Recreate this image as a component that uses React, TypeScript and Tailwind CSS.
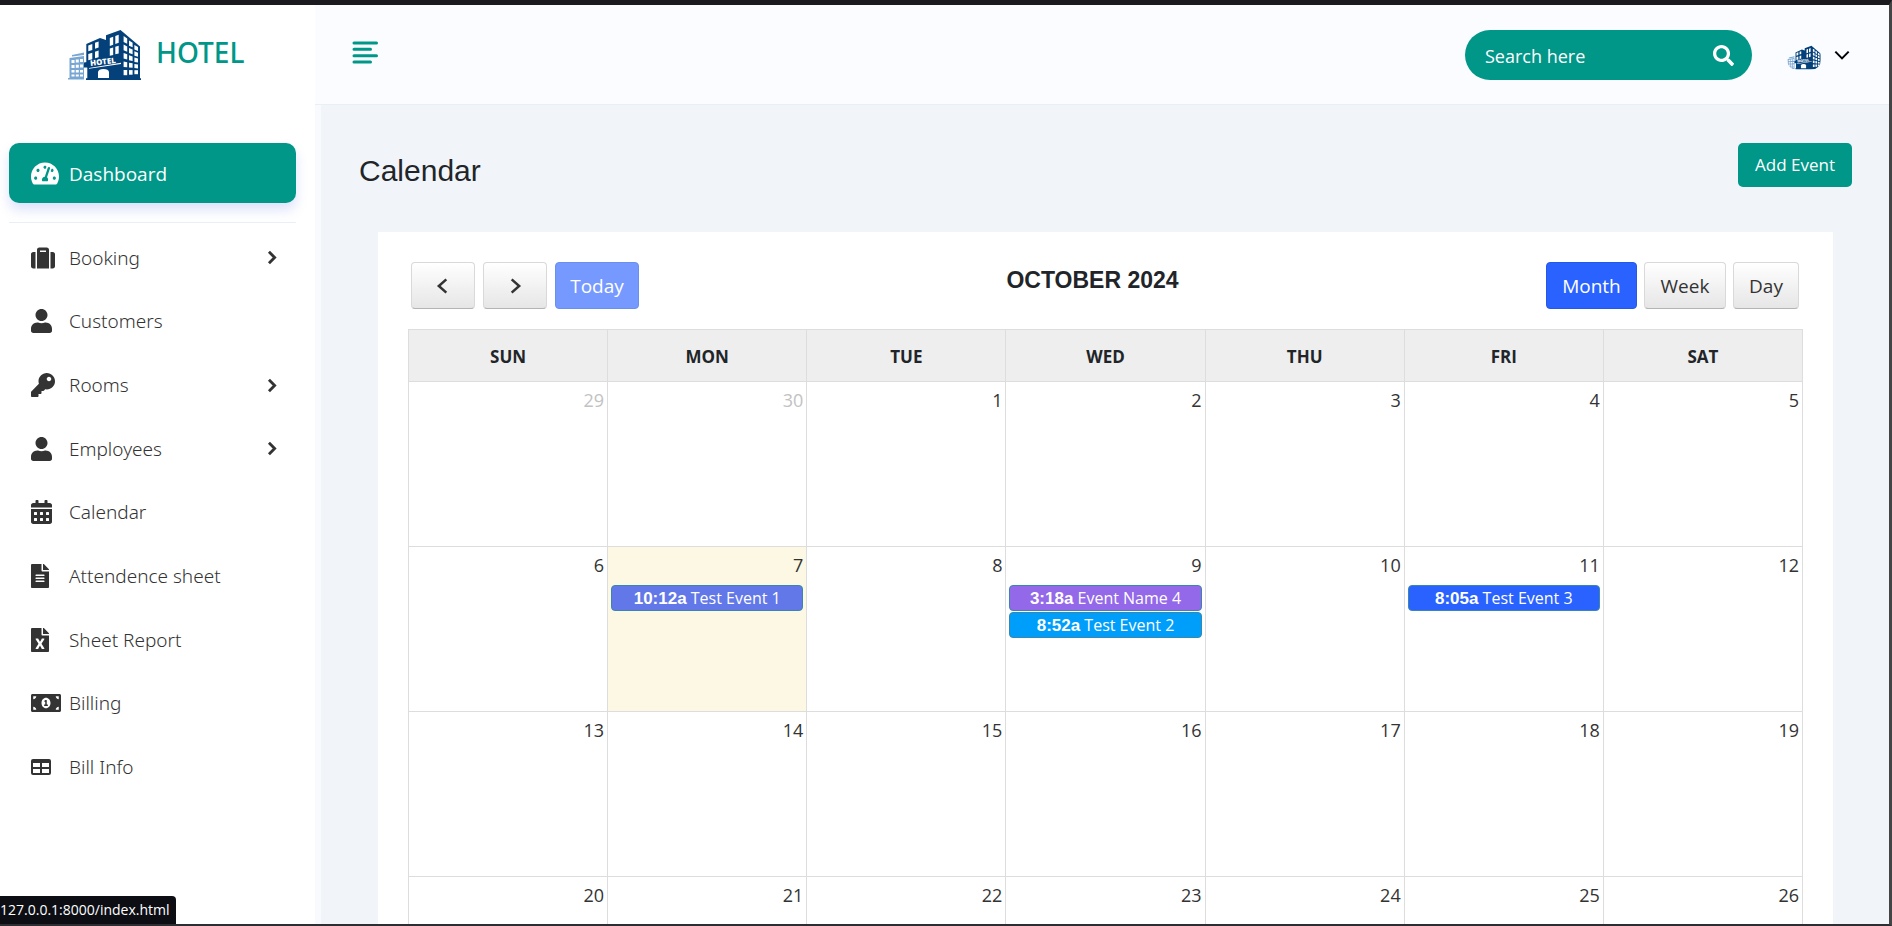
import { FaTachometerAlt, FaSuitcase, FaUser, FaKey, FaCalendarAlt, FaFileAlt, FaFileExcel, FaMoneyBillAlt, FaSearch } from "react-icons/fa";

const faceColumns = [
  { x: 55.6, top: 6, step: 8.5, height: 5.6, slope: 2.6 },
  { x: 61, top: 10.5, step: 7.4, height: 5, slope: 2.2 },
  { x: 66.4, top: 15, step: 6.3, height: 4.4, slope: 2 },
];

function HotelLogo({ className }: { className: string }) {
  return (
    <svg viewBox="0 0 73 50" className={className} aria-hidden="true">
      <path d="M4 25L16 22.500V25L4 26.500zM1.500 28L16 26V48.500H1.500z" fill="#78a6d3" />
      <path d="M0 48h16v1.500H0z" fill="#78a6d3" />
      <path
        d="M3.500 30h3v3h-3zM7.800 29.500h3v3h-3zM12 29h3v3h-3zM3.500 35h3v3h-3zM7.800 34.700h3v3h-3zM12 34.500h3v3h-3zM3.500 40h3v2.500h-3zM7.800 40h3v2.500h-3zM12 40h3v2.500h-3zM3.500 44.500h3v2h-3zM7.800 44.500h3v2h-3zM12 44.500h3v2h-3z"
        fill="#fff"
      />
      <path d="M18.300 14L32 8l6 2V5.300L52.500 0L72 16.500V48.300h1V50H18v-1.700h1.300V38L18.300 32z" fill="#04407a" />
      <path
        d="M20.300 15.500l4-1.600v6l-4 1.400zM27 12.800l3.600-1.400v6l-3.600 1.400zM20.300 24l4-1.300v6.500l-4 1zM27 21.800l3.600-1.200v6.600l-3.600 1zM41.800 8l3.400-1.300v8L41.800 16zM47.300 6l3.400-1.300v8L47.300 14zM41.800 18.500l3.400-1v7.500l-3.400 .8zM47.300 16.800l3.400-1v7.700l-3.400 .8z"
        fill="#fff"
      />
      {faceColumns.map((col) =>
        [0, 1, 2, 3, 4].map((r) => {
          const slope = col.slope * (1 - r / 4);
          return (
            <path
              key={`${col.x}-${r}`}
              d={`M${col.x} ${col.top + r * col.step}l3.600 ${slope}v${col.height - 0.4}l-3.600 ${-slope * 0.7}z`}
              fill="#fff"
            />
          );
        }),
      )}
      <path d="M16 32.500L53.500 26.500V33.500L19 37.500H16z" fill="#04407a" />
      <path d="M21 38L53 32.800V34L21 38.700z" fill="#fff" />
      <text x="22.500" y="36" fontSize="7.800" fontWeight="800" fontFamily="Open Sans, sans-serif" fill="#fff" transform="rotate(-7 22.500 36)">
        HOTEL
      </text>
      <path d="M30 48v-6q.5-3 5.500-3q5 0 5.500 3v6z" fill="#fff" />
    </svg>
  );
}

function TableIcon({ className }: { className: string }) {
  return (
    <svg viewBox="0 0 20 24" className={className} fill="currentColor" aria-hidden="true">
      <path
        fillRule="evenodd"
        d="M2 4h16a2 2 0 0 1 2 2v12a2 2 0 0 1-2 2H2a2 2 0 0 1-2-2V6a2 2 0 0 1 2-2zM2 8v4h7V8zM11 8v4h7V8zM2 14v4h7v-4zM11 14v4h7v-4z"
      />
    </svg>
  );
}

function Chevron({ className, d = "M7 4l8 8-8 8" }: { className: string; d?: string }) {
  return (
    <svg viewBox="0 0 24 24" className={className} fill="none" stroke="currentColor" aria-hidden="true">
      <path d={d} />
    </svg>
  );
}

const menu = [
  { label: "Booking", Icon: FaSuitcase, size: "h-6 w-6", sub: true },
  { label: "Customers", Icon: FaUser, size: "h-6 w-[21px]" },
  { label: "Rooms", Icon: FaKey, size: "h-6 w-6", sub: true },
  { label: "Employees", Icon: FaUser, size: "h-6 w-[21px]", sub: true },
  { label: "Calendar", Icon: FaCalendarAlt, size: "h-6 w-[21px]" },
  { label: "Attendence sheet", Icon: FaFileAlt, size: "h-6 w-[18px]" },
  { label: "Sheet Report", Icon: FaFileExcel, size: "h-6 w-[18px]" },
  { label: "Billing", Icon: FaMoneyBillAlt, size: "h-6 w-[30px]" },
  { label: "Bill Info", Icon: TableIcon, size: "h-6 w-5" },
];

const days = ["SUN", "MON", "TUE", "WED", "THU", "FRI", "SAT"];
const weeks = [
  [29, 30, 1, 2, 3, 4, 5],
  [6, 7, 8, 9, 10, 11, 12],
  [13, 14, 15, 16, 17, 18, 19],
  [20, 21, 22, 23, 24, 25, 26],
];

const events: Record<number, { time: string; name: string; color: string }[]> = {
  7: [{ time: "10:12a", name: "Test Event 1", color: "bg-[#6277e8]" }],
  9: [
    { time: "3:18a", name: "Event Name 4", color: "bg-[#9368e9]" },
    { time: "8:52a", name: "Test Event 2", color: "bg-[#009efb]" },
  ],
  11: [{ time: "8:05a", name: "Test Event 3", color: "bg-[#2962ff]" }],
};

const calendarButton = "flex h-[47px] items-center justify-center rounded border text-[19px]";
const grayButton = `${calendarButton} border-[#d9d9d9] border-b-[#b3b3b3] bg-linear-to-b from-white to-[#e6e6e6] text-[#333]`;

export default function App() {
  return (
    <div className="flex h-screen flex-col overflow-hidden border-t-[5px] border-r-[3px] border-b-2 border-t-[#1b1a1f] border-r-[#444] border-b-[#2e2d31] bg-[#f1f5fa] font-['Open_Sans',sans-serif] text-[#333]">
      <div className="flex min-h-0 flex-1">
        <aside className="w-[315px] shrink-0 bg-white">
          <a href="#home" className="flex h-[99px] items-start pt-[25px] pl-[68px]">
            <HotelLogo className="h-[50px] w-[73px]" />
            <span className="ml-[15px] font-['Noto_Sans',sans-serif] text-[28px] leading-[44px] font-medium text-[#009688]">HOTEL</span>
          </a>
          <nav className="pt-[39px] pr-[19px] pl-[9px]">
            <a href="#dashboard" className="flex h-[60px] items-center rounded-[10px] bg-[#009688] pl-[22px] text-[19px] text-white shadow-[0_7px_12px_0_rgba(95,118,232,0.21)]">
              <span className="w-[38px]"><FaTachometerAlt className="h-[25px] w-7" /></span>
              <span className="pt-[2px]">Dashboard</span>
            </a>
            <ul className="mt-[19px] grid h-[577px] auto-rows-fr border-t border-[#e8eff9] pt-[3px]">
              {menu.map(({ label, Icon, size, sub }) => (
                <li key={label} className="flex">
                  <a href="#section" className="flex flex-1 items-center pr-[15px] pl-[22px] font-['Noto_Sans',sans-serif] text-[19px] font-light">
                    <span className="w-[38px]"><Icon className={size} /></span>
                    <span className="flex-1">{label}</span>
                    {sub && <Chevron className="h-[17px] w-[17px] stroke-[4]" />}
                  </a>
                </li>
              ))}
            </ul>
          </nav>
        </aside>
        <div className="flex min-w-0 flex-1 flex-col">
          <header className="flex h-[100px] shrink-0 items-start border-b border-[#e8eff5] bg-[#fafcff] pr-[39px] pl-[37px]">
            <button aria-label="Toggle menu" className="mt-9 text-[#009688]">
              <svg viewBox="0 0 26 23" className="h-[23px] w-[26px]" fill="none" stroke="currentColor" strokeWidth="3" strokeLinecap="round">
                <path d="M2 2h22.500M2 8.300h16.500M2 14.700h22.500M2 21h16.500" />
              </svg>
            </button>
            <label className="mt-[25px] ml-auto flex h-[50px] w-[287px] items-center rounded-full bg-[#009688] pr-[18px] pl-5 text-white">
              <input aria-label="Search" placeholder="Search here" className="min-w-0 flex-1 bg-transparent pt-[2px] text-[18px] outline-none placeholder:text-white" />
              <FaSearch className="h-[21px] w-[21px]" />
            </label>
            <button aria-label="Account" className="mt-10 ml-[35px] flex items-start gap-[13px] text-black">
              <HotelLogo className="h-[25px] w-[34px] rounded-[10px]" />
              <Chevron className="mt-[2px] h-4 w-4 stroke-[3]" d="M2 7l10 10L22 7" />
            </button>
          </header>
          <main className="min-h-0 flex-1 overflow-hidden border-l-[6px] border-[#f8fafd] pr-[37px] pl-[38px]">
            <div className="flex items-start justify-between pt-[38px]">
              <h1 className="pt-[10px] font-['Liberation_Sans',sans-serif] text-[30px] leading-9 text-[#212529]">Calendar</h1>
              <button className="h-11 rounded-[5px] bg-[#009688] px-[17px] text-[17px] text-white">Add Event</button>
            </div>
            <section className="mt-[43px] mr-[19px] ml-[19px] bg-white px-[30px] pt-[30px] pb-8">
              <div className="flex items-start justify-between pr-1 pl-[3px]">
                <div className="flex gap-2">
                  <button aria-label="Previous" className={`${grayButton} w-16`}><Chevron className="h-5 w-5 stroke-[3]" d="M16 4l-9 8 9 8" /></button>
                  <button aria-label="Next" className={`${grayButton} w-16`}><Chevron className="h-5 w-5 stroke-[3]" d="M8 4l9 8-9 8" /></button>
                  <button className={`${calendarButton} w-[84px] border-[#6a8fef] bg-[#7599ff] pt-[2px] text-white`}>Today</button>
                </div>
                <h2 className="pt-1 text-center font-['Liberation_Sans',sans-serif] text-[23px] leading-7 font-bold text-[#212529]">OCTOBER 2024</h2>
                <div className="flex justify-end gap-[7px]">
                  <button className={`${calendarButton} w-[91px] border-[#2558e5] bg-[#2962ff] pt-[2px] text-white`}>Month</button>
                  <button className={`${grayButton} w-[82px] pt-[2px]`}>Week</button>
                  <button className={`${grayButton} w-[66px] pt-[2px]`}>Day</button>
                </div>
              </div>
              <table className="mt-5 w-full table-fixed border-collapse">
                <thead>
                  <tr className="h-[52px] bg-[#eee]">
                    {days.map((d) => (
                      <th key={d} className="border border-[#ddd] pt-[3px] text-[17px] font-bold text-[#212529]">{d}</th>
                    ))}
                  </tr>
                </thead>
                <tbody>
                  {weeks.map((week, w) => (
                    <tr key={w} className="h-[165px]">
                      {week.map((n) => (
                        <td key={n} className={`border border-[#ddd] px-[3px] pt-1 align-top ${n === 7 ? "bg-[#fcf8e3]" : ""}`}>
                          <div className={`text-right text-[18px] leading-7 ${w === 0 && n > 20 ? "text-[#c2c2c2]" : "text-[#333]"}`}>{n}</div>
                          <div className="mt-[6px] flex flex-col gap-px">
                            {(events[n] ?? []).map((e) => (
                              <a key={e.name} href="#event" className={`block h-[26px] rounded border border-[#3a87ad] text-center text-[16px] leading-6 whitespace-nowrap text-white ${e.color}`}>
                                <b className="font-['Liberation_Sans',sans-serif] text-[17px]">{e.time}</b> {e.name}
                              </a>
                            ))}
                          </div>
                        </td>
                      ))}
                    </tr>
                  ))}
                </tbody>
              </table>
            </section>
          </main>
        </div>
      </div>
      <div className="fixed bottom-[2px] left-0 h-7 rounded-tr bg-[#0d0e14] pr-[6px] text-[14px] leading-7 text-white">127.0.0.1:8000/index.html</div>
    </div>
  );
}
